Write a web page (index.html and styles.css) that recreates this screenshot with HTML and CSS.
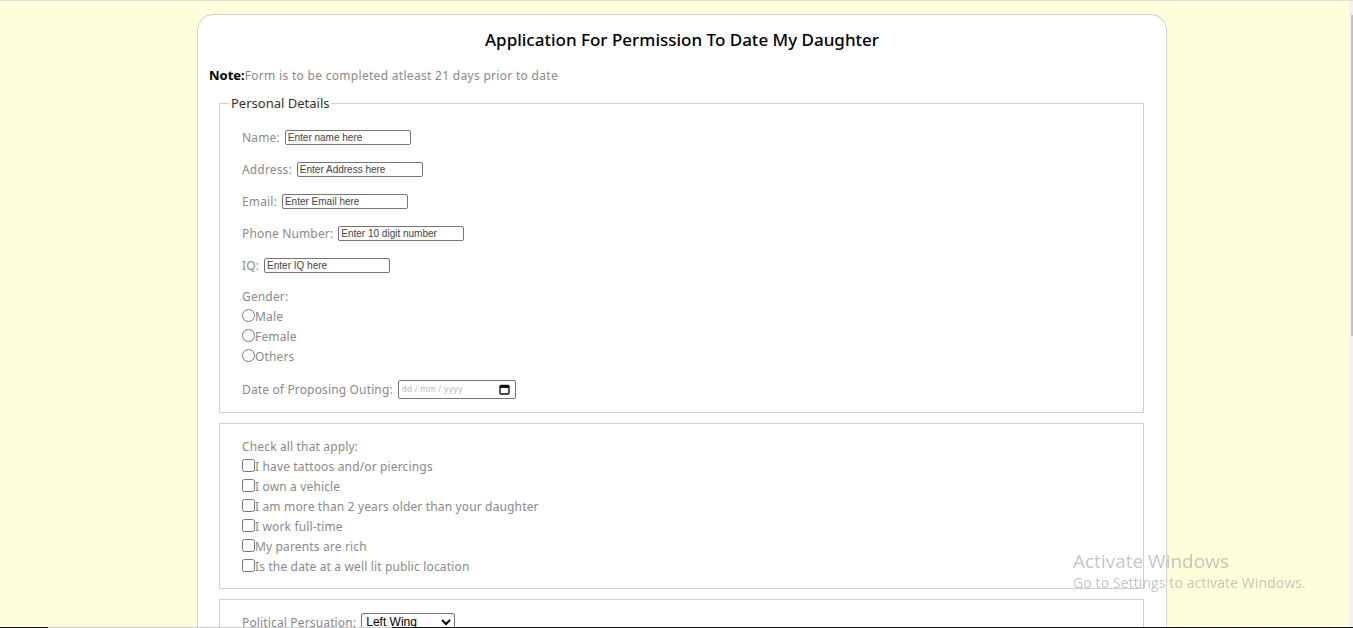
FILE: index.html
```html
<!DOCTYPE html>
<html lang="en">
<head>
<meta charset="utf-8">
<title>Application For Permission To Date My Daughter</title>
<link rel="stylesheet" href="styles.css">
</head>
<body>
<div class="page">
  <h1 class="title">Application For Permission To Date My Daughter</h1>
  <p class="note"><b>Note:</b>Form is to be completed atleast 21 days prior to date</p>

  <fieldset class="box">
    <legend>Personal Details</legend>
    <div class="inner first">
      <div class="row"><label for="name">Name:</label><input id="name" class="txt" type="text" placeholder="Enter name here"></div>
      <div class="row"><label for="addr">Address:</label><input id="addr" class="txt" type="text" placeholder="Enter Address here"></div>
      <div class="row"><label for="email">Email:</label><input id="email" class="txt" type="text" placeholder="Enter Email here"></div>
      <div class="row"><label for="phone">Phone Number:</label><input id="phone" class="txt" type="text" placeholder="Enter 10 digit number"></div>
      <div class="row"><label for="iq">IQ:</label><input id="iq" class="txt" type="text" placeholder="Enter IQ here"></div>
      <div class="group">
        <div class="line">Gender:</div>
        <div class="line"><input class="mark" type="radio" name="g" id="m"><label for="m">Male</label></div>
        <div class="line"><input class="mark" type="radio" name="g" id="f"><label for="f">Female</label></div>
        <div class="line"><input class="mark" type="radio" name="g" id="o"><label for="o">Others</label></div>
      </div>
      <div class="row date-row"><label>Date of Proposing Outing:</label>
        <span class="date"><span class="date-ph">dd / mm / yyyy</span>
          <svg class="cal" width="11" height="11" viewBox="0 0 11 11"><rect x="1" y="1.5" width="9" height="8.5" rx="1" fill="none" stroke="#111" stroke-width="1.4"/><rect x="1" y="1.5" width="9" height="2.5" fill="#111"/></svg>
        </span>
      </div>
    </div>
  </fieldset>

  <fieldset class="box">
    <div class="inner checks">
      <div class="line">Check all that apply:</div>
      <div class="line"><input class="mark" type="checkbox" id="c1"><label for="c1">I have tattoos and/or piercings</label></div>
      <div class="line"><input class="mark" type="checkbox" id="c2"><label for="c2">I own a vehicle</label></div>
      <div class="line"><input class="mark" type="checkbox" id="c3"><label for="c3">I am more than 2 years older than your daughter</label></div>
      <div class="line"><input class="mark" type="checkbox" id="c4"><label for="c4">I work full-time</label></div>
      <div class="line"><input class="mark" type="checkbox" id="c5"><label for="c5">My parents are rich</label></div>
      <div class="line"><input class="mark" type="checkbox" id="c6"><label for="c6">Is the date at a well lit public location</label></div>
    </div>
  </fieldset>

  <fieldset class="box">
    <div class="inner politics">
      <div class="row"><label for="pol">Political Persuation:</label>
        <select id="pol" class="sel"><option>Left Wing</option><option>Right Wing</option><option>Centrist</option></select>
      </div>
    </div>
  </fieldset>
</div>

<div class="watermark">
  <div class="wm1">Activate Windows</div>
  <div class="wm2">Go to Settings to activate Windows.</div>
</div>
<div class="scrollbar"><div class="thumb"></div></div>
<div class="bottom-line"></div>
</body>
</html>
```
FILE: styles.css
```css
html, body {
  margin: 0;
  overflow: hidden;
}
body {
  background: #fffedb;
  border-top: 1px solid #dedede;
  font-family: "Noto Sans", sans-serif;
  font-size: 12px;
  letter-spacing: 0.15px;
  color: #8a8a8a;
  height: 627px;
}
.page {
  width: 946px;
  margin: 13px 0 0 197px;
  padding: 0 11px 20px;
  background: #fff;
  border: 1px solid #cfcfcf;
  border-radius: 16px;
}
.title {
  margin: 13px 0 0;
  font-size: 17px;
  line-height: 24px;
  font-weight: 500;
  letter-spacing: 0;
  color: #000;
  text-align: center;
}
.note {
  margin: 14px 0 0;
  line-height: 18px;
  letter-spacing: 0.3px;
}
.note b {
  color: #000;
  font-size: 13px;
  letter-spacing: 0;
}
.box {
  margin: 9px 11px 10px 10px;
  padding: 0 0 0 9px;
  border: 1px solid #cfcfcf;
  min-width: 0;
}
.box legend {
  padding: 0 2px;
  font-size: 13px;
  line-height: 18px;
  letter-spacing: 0;
  color: #333;
}
.inner {
  padding: 0 0 13px 13px;
}
.inner.first {
  padding-top: 15px;
}
.inner.checks {
  padding-top: 13px;
  padding-bottom: 11px;
}
.inner.politics {
  padding-top: 12px;
  padding-bottom: 10px;
}
.row {
  display: flex;
  align-items: center;
  height: 20px;
  margin-bottom: 12px;
}
.row label {
  margin-right: 5px;
}
.txt {
  width: 126px;
  height: 15px;
  box-sizing: border-box;
  padding: 0 2px;
  border: 1px solid #767676;
  border-radius: 2px;
  font-family: "Liberation Sans", Arial, sans-serif;
  font-size: 10px;
  letter-spacing: 0;
}
.txt::placeholder {
  color: #444;
}
.group {
  margin-bottom: 13px;
}
.line {
  line-height: 20px;
  height: 20px;
}
.mark {
  margin: 0;
  width: 13px;
  height: 13px;
  vertical-align: -1px;
}
.date-row {
  margin-bottom: 0;
  margin-top: -1px;
}
.date {
  display: inline-flex;
  align-items: center;
  justify-content: space-between;
  width: 118px;
  height: 19px;
  box-sizing: border-box;
  padding: 0 5px 0 3px;
  border: 1px solid #767676;
  border-radius: 2px;
}
.date-ph {
  font-family: "DejaVu Sans Condensed", "DejaVu Sans", sans-serif;
  font-size: 9px;
  letter-spacing: 0;
  color: #b8b8b8;
}
.cal {
  display: block;
}
.sel {
  width: 94px;
  height: 19px;
  font-family: "Liberation Sans", Arial, sans-serif;
  font-size: 12px;
  letter-spacing: 0;
  color: #000;
  border: 1px solid #767676;
  border-radius: 2px;
  background: #fff;
}
.watermark {
  position: fixed;
  left: 1073px;
  top: 549px;
  font-family: "Open Sans", "Noto Sans", sans-serif;
  letter-spacing: 0;
  color: rgba(150, 150, 150, 0.55);
}
.wm1 {
  font-size: 19px;
  line-height: 24px;
}
.wm2 {
  font-size: 14px;
  line-height: 20px;
  letter-spacing: 0.1px;
}
.scrollbar {
  position: fixed;
  top: 1px;
  right: 0;
  width: 4px;
  bottom: 0;
  background: #f1f1f1;
}
.thumb {
  margin: 14px 0 0 2px;
  height: 321px;
  background: #c1c1c1;
}
.bottom-line {
  position: fixed;
  left: 0;
  right: 0;
  bottom: 0;
  height: 1px;
  background: linear-gradient(to right, #111 0 48px, #ccc 48px 392px, #111 392px);
}
```
